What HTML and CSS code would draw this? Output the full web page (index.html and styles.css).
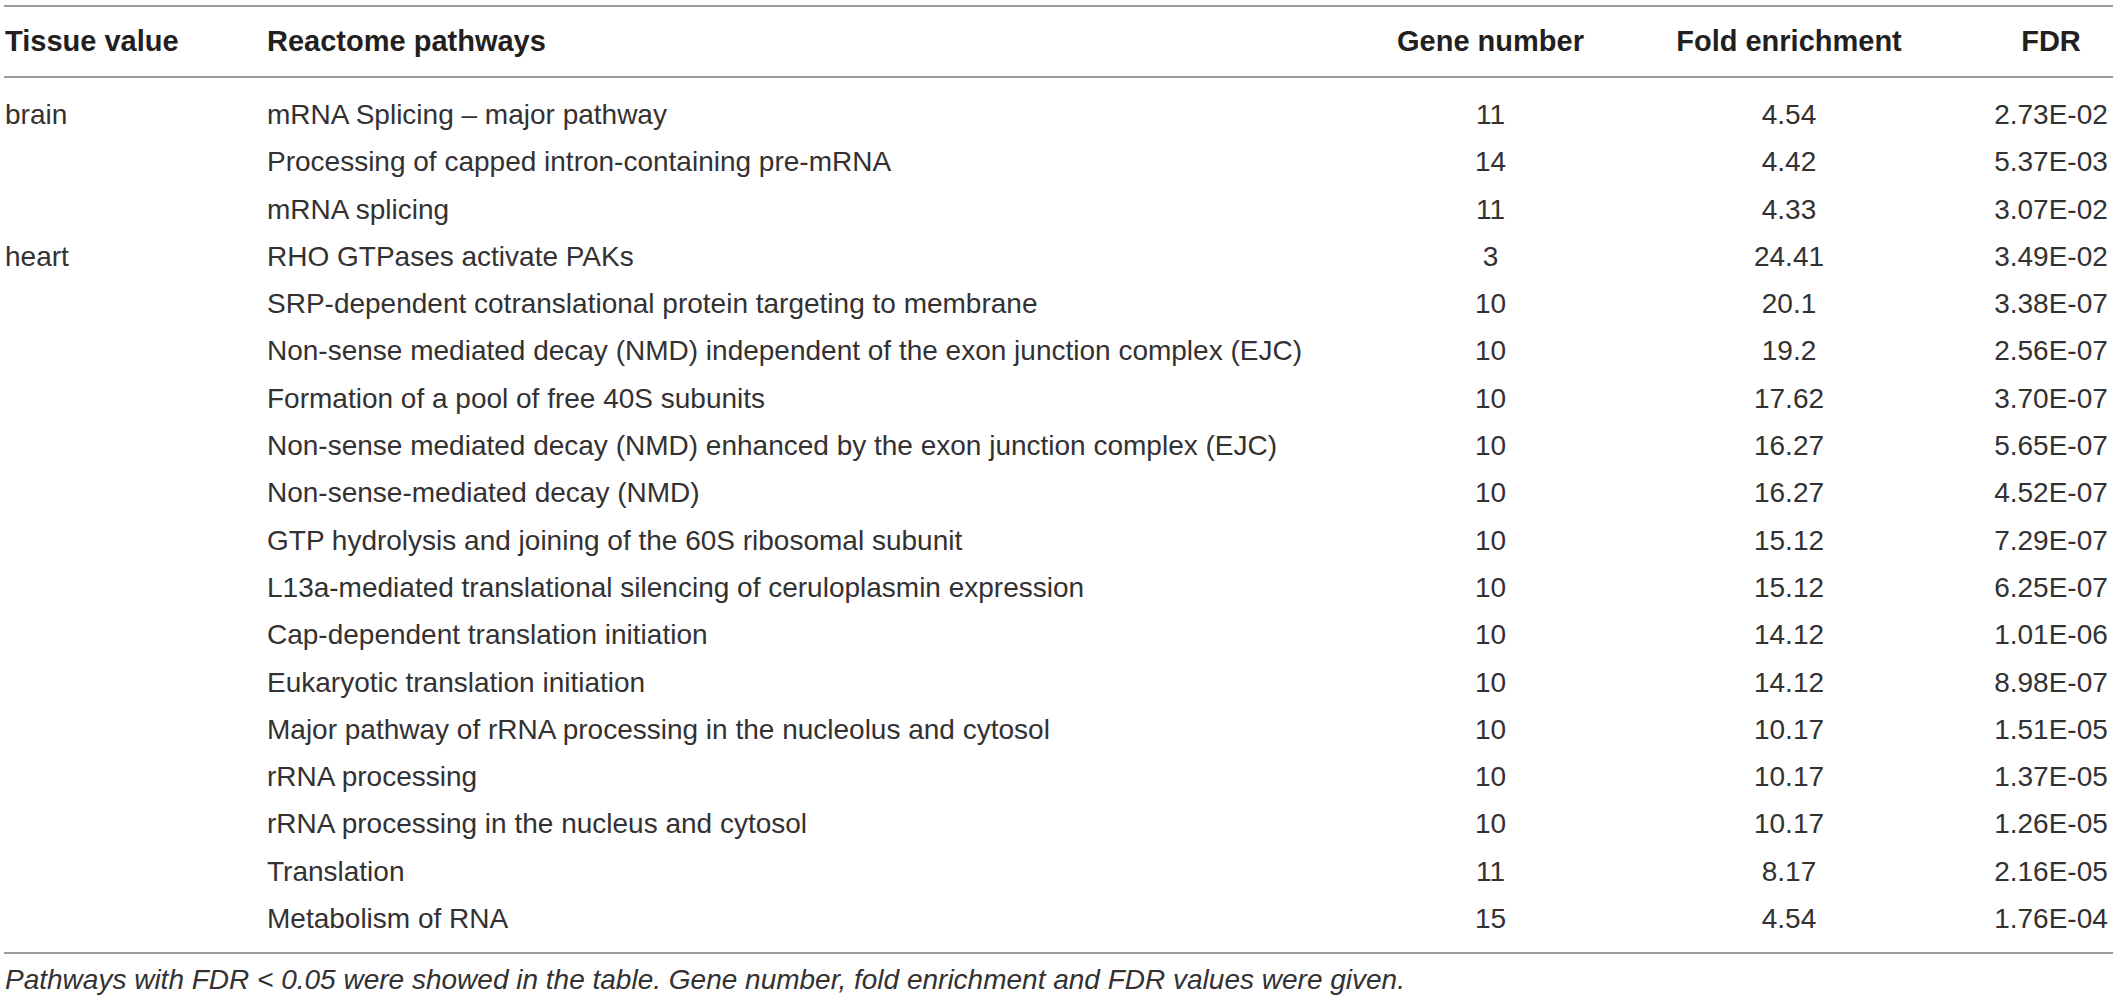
FILE: index.html
```html
<!DOCTYPE html>
<html lang="en">
<head>
<meta charset="utf-8">
<title>Reactome pathways</title>
<link rel="stylesheet" href="styles.css">
</head>
<body>
<div class="page">
  <table class="data">
    <colgroup>
      <col class="c-tissue">
      <col class="c-path">
      <col class="c-gene">
      <col class="c-fold">
      <col class="c-fdr">
    </colgroup>
    <thead>
      <tr>
        <th class="left">Tissue value</th>
        <th class="left">Reactome pathways</th>
        <th>Gene number</th>
        <th>Fold enrichment</th>
        <th>FDR</th>
      </tr>
    </thead>
    <tbody>
      <tr class="first"><td class="left">brain</td><td class="left">mRNA Splicing – major pathway</td><td>11</td><td>4.54</td><td>2.73E-02</td></tr>
      <tr><td class="left"></td><td class="left">Processing of capped intron-containing pre-mRNA</td><td>14</td><td>4.42</td><td>5.37E-03</td></tr>
      <tr><td class="left"></td><td class="left">mRNA splicing</td><td>11</td><td>4.33</td><td>3.07E-02</td></tr>
      <tr><td class="left">heart</td><td class="left">RHO GTPases activate PAKs</td><td>3</td><td>24.41</td><td>3.49E-02</td></tr>
      <tr><td class="left"></td><td class="left">SRP-dependent cotranslational protein targeting to membrane</td><td>10</td><td>20.1</td><td>3.38E-07</td></tr>
      <tr><td class="left"></td><td class="left">Non-sense mediated decay (NMD) independent of the exon junction complex (EJC)</td><td>10</td><td>19.2</td><td>2.56E-07</td></tr>
      <tr><td class="left"></td><td class="left">Formation of a pool of free 40S subunits</td><td>10</td><td>17.62</td><td>3.70E-07</td></tr>
      <tr><td class="left"></td><td class="left">Non-sense mediated decay (NMD) enhanced by the exon junction complex (EJC)</td><td>10</td><td>16.27</td><td>5.65E-07</td></tr>
      <tr><td class="left"></td><td class="left">Non-sense-mediated decay (NMD)</td><td>10</td><td>16.27</td><td>4.52E-07</td></tr>
      <tr><td class="left"></td><td class="left">GTP hydrolysis and joining of the 60S ribosomal subunit</td><td>10</td><td>15.12</td><td>7.29E-07</td></tr>
      <tr><td class="left"></td><td class="left">L13a-mediated translational silencing of ceruloplasmin expression</td><td>10</td><td>15.12</td><td>6.25E-07</td></tr>
      <tr><td class="left"></td><td class="left">Cap-dependent translation initiation</td><td>10</td><td>14.12</td><td>1.01E-06</td></tr>
      <tr><td class="left"></td><td class="left">Eukaryotic translation initiation</td><td>10</td><td>14.12</td><td>8.98E-07</td></tr>
      <tr><td class="left"></td><td class="left">Major pathway of rRNA processing in the nucleolus and cytosol</td><td>10</td><td>10.17</td><td>1.51E-05</td></tr>
      <tr><td class="left"></td><td class="left">rRNA processing</td><td>10</td><td>10.17</td><td>1.37E-05</td></tr>
      <tr><td class="left"></td><td class="left">rRNA processing in the nucleus and cytosol</td><td>10</td><td>10.17</td><td>1.26E-05</td></tr>
      <tr><td class="left"></td><td class="left">Translation</td><td>11</td><td>8.17</td><td>2.16E-05</td></tr>
      <tr class="last"><td class="left"></td><td class="left">Metabolism of RNA</td><td>15</td><td>4.54</td><td>1.76E-04</td></tr>
    </tbody>
  </table>
  <p class="caption">Pathways with FDR &lt; 0.05 were showed in the table. Gene number, fold enrichment and FDR values were given.</p>
</div>
</body>
</html>
```

FILE: styles.css
```css
html, body {
  margin: 0;
  padding: 0;
  background: #ffffff;
}

body {
  font-family: "Liberation Sans", Arial, sans-serif;
  color: #231f20;
}

.page {
  padding: 5px 0 0 4px;
  width: 2109px;
}

.data {
  width: 2109px;
  table-layout: fixed;
  border-collapse: collapse;
  border-top: 2px solid #9c9c9c;
  border-bottom: 2px solid #9c9c9c;
}

.c-tissue { width: 263px; }
.c-path { width: 1125px; }
.c-gene { width: 197px; }
.c-fold { width: 400px; }
.c-fdr { width: 124px; }

.data th {
  font-size: 29px;
  font-weight: bold;
  line-height: 33px;
  padding: 18px 0 18px 0;
  text-align: center;
  white-space: nowrap;
  border-bottom: 2px solid #9c9c9c;
  color: #231f20;
}

.data td {
  font-size: 28px;
  line-height: 47.3px;
  height: 47.3px;
  padding: 0;
  text-align: center;
  white-space: nowrap;
  vertical-align: top;
  color: #333132;
}

.data .left {
  text-align: left;
}

.data th.left:first-child,
.data td.left:first-child {
  padding-left: 1px;
}

.data tr.first td {
  padding-top: 13px;
}

.data tr.last td {
  padding-bottom: 10px;
}

.caption {
  margin: 10px 0 0 0;
  padding-left: 1px;
  font-size: 28px;
  line-height: 32px;
  font-style: italic;
  color: #333132;
  white-space: nowrap;
}
```
